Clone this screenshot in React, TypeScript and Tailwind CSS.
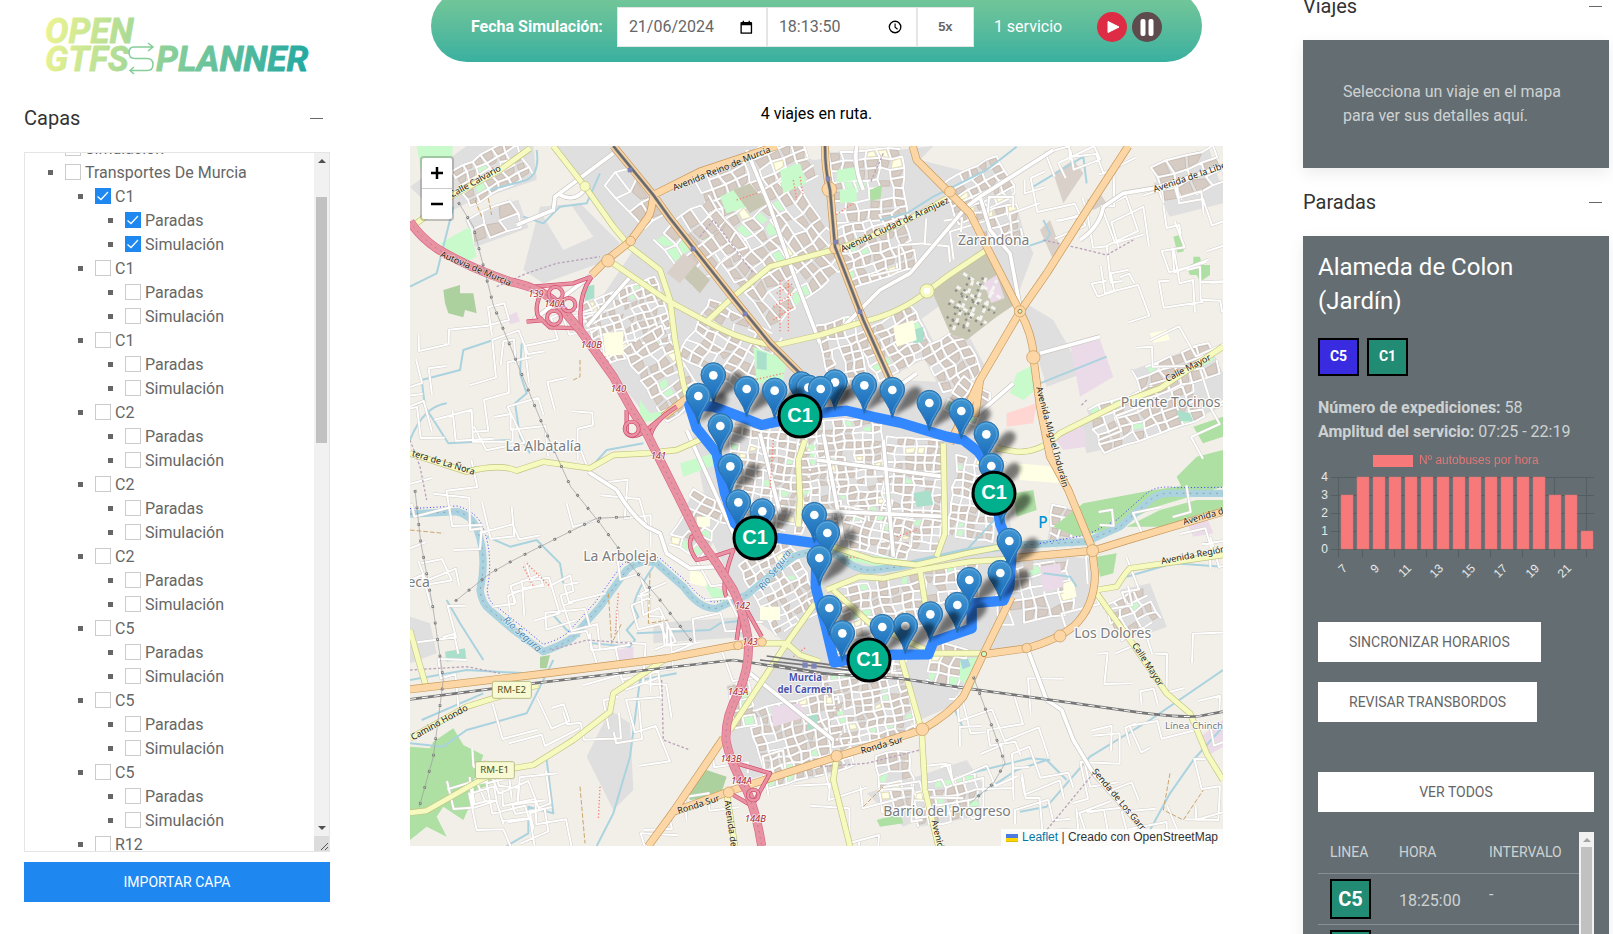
import React from "react";

/* ------------------------------------------------------------------ */
/* Map data. One map unit is a third of a pixel.                        */
/* ------------------------------------------------------------------ */

function makeRandom(seed: number) {
  let s = seed;
  return () => {
    s = (s * 1664525 + 1013904223) % 4294967296;
    return s / 4294967296;
  };
}

type District = [cx: number, cy: number, w: number, h: number, angle: number, px: number, py: number];

const districts: District[] = [
  [1060, 110, 330, 150, -24, 38, 30],
  [1130, 330, 330, 330, 52, 42, 32],
  [900, 300, 170, 200, 52, 46, 34],
  [690, 540, 250, 190, -20, 24, 22],
  [690, 165, 150, 90, 50, 60, 40],
  [800, 700, 150, 260, -32, 34, 28],
  [985, 620, 230, 200, 30, 34, 28],
  [1400, 130, 210, 200, -4, 36, 30],
  [1425, 320, 210, 170, -18, 30, 26],
  [1490, 610, 200, 160, -28, 32, 26],
  [1330, 640, 120, 200, -14, 28, 26],
  [1730, 150, 180, 130, -28, 32, 26],
  [1800, 260, 130, 110, -14, 32, 26],
  [1660, 660, 150, 150, -28, 34, 30],
  [1100, 1010, 240, 320, 8, 28, 24],
  [1330, 990, 260, 300, -4, 28, 22],
  [1540, 1060, 180, 330, 3, 30, 24],
  [1720, 1080, 130, 250, 8, 28, 24],
  [1420, 1180, 250, 120, 12, 30, 24],
  [1150, 1340, 180, 240, -28, 28, 24],
  [1450, 1400, 260, 160, -10, 32, 26],
  [1660, 1330, 170, 120, -6, 32, 28],
  [1890, 1360, 210, 160, -10, 38, 32],
  [1200, 1800, 260, 240, -14, 30, 26],
  [1400, 1700, 240, 230, -10, 28, 22],
  [1640, 1580, 110, 130, 12, 34, 30],
  [2240, 820, 330, 140, -20, 36, 28],
  [2330, 700, 240, 110, -20, 40, 32],
  [2200, 1420, 140, 120, -28, 34, 28],
  [1990, 1160, 80, 110, 10, 34, 28],
  [1640, 1980, 190, 130, -10, 32, 26],
  [1480, 1930, 90, 180, -8, 34, 28],
  [2360, 110, 180, 120, -18, 50, 38],
  [280, 90, 220, 110, -28, 34, 24],
  [290, 250, 170, 90, -20, 50, 38],
  [900, 1150, 120, 170, 26, 36, 30],
  [1400, 1570, 200, 60, 4, 36, 26],
  [1020, 1690, 60, 120, -10, 32, 26],
  [1700, 780, 90, 110, 30, 34, 28],
];

const cityBlocks = (() => {
  const rnd = makeRandom(77);
  return districts.map(([cx, cy, w, h, angle, px, py]) => {
    let streets = "";
    let buildings = "";
    let parks = "";
    let civic = "";
    const cols = Math.round(w / px);
    const rows = Math.round(h / py);
    const nodes: [number, number][][] = [];
    for (let i = 0; i <= cols; i++) {
      nodes.push([]);
      for (let j = 0; j <= rows; j++) {
        nodes[i].push([
          Math.round(-w / 2 + i * px + (rnd() - 0.5) * px * 0.34),
          Math.round(-h / 2 + j * py + (rnd() - 0.5) * py * 0.34),
        ]);
      }
    }
    for (let i = 0; i <= cols; i++) {
      for (let j = 0; j <= rows; j++) {
        const [x, y] = nodes[i][j];
        if (i < cols && rnd() < 0.84) streets += `M${x} ${y}L${nodes[i + 1][j].join(" ")}`;
        if (j < rows && rnd() < 0.8) streets += `M${x} ${y}L${nodes[i][j + 1].join(" ")}`;
        if (i < cols && j < rows) {
          const [ax, ay] = nodes[i + 1][j];
          const [bx, by] = nodes[i + 1][j + 1];
          const [dx, dy] = nodes[i][j + 1];
          const cut = Math.round(rnd() * 7);
          const shape = `M${x + 5} ${y + 5}L${ax - 5} ${ay + 5} ${bx - 5 - cut} ${by - 5} ${dx + 5} ${dy - 5}z`;
          const r = rnd();
          if (r < 0.68) buildings += shape;
          else if (r < 0.76) parks += shape;
          else if (r < 0.79) civic += shape;
        }
      }
    }
    return { cx, cy, w, h, angle, streets, buildings, parks, civic };
  });
})();

const countryLanes = (() => {
  const rnd = makeRandom(4242);
  const zones = [
    [40, 480, 620, 1100, 26],
    [40, 1150, 1000, 1620, 28],
    [60, 1650, 960, 2110, 26],
    [1900, 60, 2460, 700, 24],
    [2080, 900, 2460, 1600, 16],
    [1550, 1650, 2460, 2110, 30],
    [1050, 1900, 1500, 2110, 8],
    [1500, 40, 2100, 400, 8],
  ];
  let d = "";
  for (const [x0, y0, x1, y1, n] of zones) {
    for (let k = 0; k < n; k++) {
      let x = x0 + rnd() * (x1 - x0);
      let y = y0 + rnd() * (y1 - y0);
      const base = -0.35 + rnd() * 0.3;
      let turn = rnd() < 0.5;
      d += `M${Math.round(x)} ${Math.round(y)}`;
      const steps = 2 + Math.floor(rnd() * 4);
      for (let s = 0; s < steps; s++) {
        const len = 30 + rnd() * 90;
        const ang = base + (turn ? Math.PI / 2 : 0) + (rnd() - 0.5) * 0.4;
        const sign = rnd() < 0.75 ? 1 : -1;
        x += Math.cos(ang) * len * sign;
        y += Math.sin(ang) * len * sign;
        d += `L${Math.round(x)} ${Math.round(y)}`;
        turn = !turn;
      }
    }
  }
  return d;
})();

const urbanAreas = [
  "M460 18L1120 18 1240 60 1600 18 1560 60 1700 210 1780 380 1560 540 1500 700 1240 720 860 780 740 830 540 570 700 330z",
  "M860 780L1230 700 1500 720 1700 730 1800 900 1840 1220 2080 1260 2070 1420 1960 1490 1750 1543 1650 1700 1330 1840 1000 1930 990 1760 1160 1510 1040 1420 940 1210 900 1000z",
  "M30 140L200 18 400 18 410 120 200 190 120 230z",
  "M420 200l120 -10 120 120 -60 60 -170 60 -60 -40z",
  "M2040 860L2440 640 2469 700 2469 800 2230 900 2060 940z",
  "M2160 1350l90 -20 50 130 -80 30z",
  "M1560 60l240 60 100 220 -60 160 -120 -280z",
  "M560 1850l70 -140 60 40 10 200 -60 60z",
  "M30 1430l60 20 20 90 -80 30z",
  "M1400 1960l300 -100 60 90 -250 110z",
  "M2260 130l140 -60 69 60 0 60 -160 40z",
  "M760 1450l270 -20 10 60 -280 20z",
  "M1860 480l100 60 90 160 -110 40z",
];

const greenAreas: [string, string][] = [
  ["#f2efe9", "M430 230l80 -40 70 100 -90 40z"],
  ["#c8facc", "M50 18h108l-4 90 -90 -10z"],
  ["#c8facc", "M120 310l90 -50 20 90 -40 20z"],
  ["#c8facc", "M1060 620l100 40 -10 60 -80 10z"],
  ["#c8facc", "M1140 90l60 -20 20 60 -70 30z"],
  ["#c8facc", "M960 170l60 -30 20 60 -60 20z"],
  ["#c8facc", "M1850 700l60 -30 10 70 -50 40 -40 -20z"],
  ["#c8facc", "M1680 1560l60 -10 -20 100 -40 -30z"],
  ["#c8facc", "M840 970l100 -30 20 30 -110 40z"],
  ["#c8facc", "M1330 1240l120 10 60 10 -60 20 -120 -20z"],
  ["#c8facc", "M910 1330l60 20 20 40 -50 -10z"],
  ["#c8facc", "M1310 90l60 -10 0 40 -60 8z"],
  ["#c8facc", "M1320 150l50 -5 0 40 -50 5z"],
  ["#c8facc", "M720 780l30 40 60 -10 -40 30 -50 10z"],
  ["#add19e", "M130 450l50 -15 0 25 40 0 10 60 -35 -10 -5 22 -45 -12 -10 -30z"],
  ["#add19e", "M420 1550l30 -5 -10 40 -20 0z"],
  ["#add19e", "M860 1950l60 -60 60 20 -20 60 -90 10z"],
  ["#aedfa3", "M30 1820l60 5 10 -20 60 -40 30 50 60 30 -20 60 60 20 -60 25 -40 90 -60 -40 -20 30 30 60 -60 -30 -50 40z"],
  ["#aedfa3", "M1840 1060l60 -10 10 60 -60 20z"],
  ["#aedfa3", "M1960 1160l90 -70 210 -40 209 -30 0 20 -200 60 -140 70 -100 20z"],
  ["#aedfa3", "M2180 1160l100 -50 110 -30 79 0 0 40 -180 40z"],
  ["#aedfa3", "M2090 1250l60 -10 -10 60 -40 10z"],
  ["#aedfa3", "M2330 1010l60 -60 79 -20 0 100 -120 20z"],
  ["#aedfa3", "M2380 860l89 -30 0 60 -60 20z"],
  ["#aedfa3", "M2360 380l20 -10 0 -20 20 0 5 25 25 0 0 30 -30 20 -10 -20 -20 0z"],
  ["#aedfa3", "M2320 290l20 -6 12 50 -20 4z"],
  ["#aedfa3", "M1410 150l36 -16 -4 40 -30 10z"],
  ["#aedfa3", "M1430 2040l70 -20 10 30 -70 10z"],
  ["#c7c7b4", "M1590 440l170 -100 90 150 -60 40 -90 70 -50 -20z"],
  ["#c7c7b4", "M1000 150l50 -20 50 60 -50 30z"],
  ["#c7c7b4", "M880 370l50 50 -30 40 -50 -50z"],
  ["#ebdbe8", "M1750 430l40 -25 24 70 -40 14z"],
  ["#ebdbe8", "M2010 610l90 -10 40 110 -100 60z"],
  ["#ebdbe8", "M1960 890l90 -30 10 60 -70 10z"],
  ["#ebdbe8", "M650 1530l50 -10 0 40 -50 6z"],
  ["#ebdbe8", "M1110 1700l90 -10 20 40 -100 30z"],
  ["#ebdbe8", "M320 530l30 -15 10 30 -30 8z"],
  ["#ebdbe8", "M2360 1150l60 -20 20 50 -60 10z"],
  ["#ebdbe8", "M1920 1280l60 -10 10 70 -60 15z"],
  ["#ebdbe8", "M2400 1790l69 -50 0 80 -50 30z"],
  ["#ffd6d1", "M1820 820l90 -30 -10 60 -80 10z"],
  ["#aae0cb", "M555 440l28 -6 0 40 -28 10z"],
  ["#aae0cb", "M135 1535l60 -10 4 34 -60 6z"],
  ["#aae0cb", "M1070 630l30 10 0 50 -30 -4z"],
  ["#aae0cb", "M1540 570l30 -10 0 46 -30 4z"],
  ["#aae0cb", "M1220 1730l30 -8 4 40 -30 8z"],
  ["#aae0cb", "M1540 1060l50 -10 10 44 -50 8z"],
  ["#aae0cb", "M2330 810l40 10 10 24 -40 0z"],
  ["#ffffe5", "M610 580l60 -6 0 70 -60 4z"],
  ["#ffffe5", "M1480 560l60 -20 10 60 -60 20z"],
  ["#ffffe5", "M1080 1400l60 0 0 40 -60 0z"],
  ["#ffffe5", "M2250 580l50 -10 10 30 -50 8z"],
  ["#ffffe5", "M1850 970l120 10 10 50 -120 -10z"],
  ["#ffffe5", "M870 1290l50 10 0 40 -50 -10z"],
  ["#ffffe5", "M1990 1330l30 -10 10 50 -40 10z"],
  ["#ffffe5", "M890 1130l40 0 0 30 -40 0z"],
  ["#aad3df", "M1680 1560l24 -4 8 22 -24 10z"],
  ["#d9d0c9", "M800 400l50 -60 40 30 -50 60z"],
  ["#d9d0c9", "M1960 100l60 -40 30 40 -60 90z"],
  ["#d9d0c9", "M2060 180l40 -20 20 30 -40 20z"],
  ["#d9d0c9", "M1920 270l30 -30 30 80 -20 40z"],
  ["#d9d0c9", "M1870 1250l30 0 0 40 -30 0z"],
];

const river =
  "M30 1122L170 1115Q215 1125 232 1170Q262 1250 240 1350Q245 1390 270 1410L340 1470 430 1535Q500 1510 520 1490L600 1400 680 1290Q720 1255 770 1270L850 1340Q900 1410 950 1405L1040 1365 1180 1250Q1260 1220 1320 1250Q1370 1295 1420 1290L1500 1280 1700 1235 1860 1215 2060 1205 2160 1160 2250 1080Q2280 1055 2330 1060L2469 1060";

const riverPath =
  "M30 1106L170 1098Q235 1115 252 1170Q280 1250 262 1345 262 1385 290 1400L360 1455 430 1513Q490 1495 510 1470L585 1388 665 1275Q715 1235 780 1255L860 1325Q910 1390 950 1386L1020 1365M1920 1210L2060 1185 2150 1140 2240 1060Q2270 1035 2330 1043L2469 1042";

const streams = [
  "M30 440L110 400 140 280 160 200",
  "M410 30Q420 100 380 120L270 150",
  "M600 100L560 190 480 200 430 250 370 230",
  "M280 600L190 630 180 690 65 720 75 800",
  "M365 610L360 700 380 760 345 790 360 890 390 940",
  "M75 800L145 910 330 900",
  "M730 910L620 930 570 985",
  "M30 900Q70 800 140 790",
  "M260 1190L330 1220 410 1200 480 1270 490 1330",
  "M760 1280Q710 1350 700 1400L715 1430 680 1470 705 1500 690 1520 575 1510",
  "M140 1380L180 1450 250 1560",
  "M30 1620L200 1590 380 1600",
  "M455 1420L500 1470 540 1490",
  "M1040 1440L960 1450 930 1470 710 1480",
  "M65 1740L250 1660 M30 1810L130 1820 200 1770 380 1720 460 1560",
  "M590 2118L640 2020 690 1850 720 1620 830 1600",
  "M440 1860L460 2020 385 2000 385 2080 320 2118",
  "M1440 240L1520 220 1600 170 1760 90 1850 20",
  "M1900 140L2050 50 2060 130 M1930 240L1950 280 1940 300 1880 320",
  "M1920 730L2120 650",
  "M1710 1900L1890 1855 1950 1860 M1730 1970L1850 1890 1940 1860 2000 1920",
  "M1860 2015L1940 2000 2070 1850 2250 1740 2469 1590",
  "M1660 1700L1690 1765",
  "M2250 2070L2310 1960 2380 1860 2469 1760",
  "M1930 1300L2010 1310 2030 1340",
  "M2180 1310L2320 1270 2469 1280",
  "M1700 1230L1820 1100",
];

const secondaryRoads = [
  "M460 18L555 140 640 260 690 320 780 390 810 480 825 600 850 730 860 770",
  "M30 265L160 165 300 90 390 25",
  "M640 370L800 480 920 545Q1040 610 1130 615L1260 585 1390 545Q1500 520 1580 455L1640 410 1760 330",
  "M920 545L1000 470 1110 380 1260 340 1320 325Q1500 260 1640 175",
  "M30 940L200 995Q300 970 350 992L430 965 570 985 640 945 740 940 830 930 910 895",
  "M1790 925L1850 935Q1920 940 1980 880L2160 790 2280 745 2469 620",
  "M2090 1350L2150 1340Q2175 1300 2190 1285L2469 1245",
  "M2090 1360L2190 1500 2300 1660 2370 1720 2420 1840 2469 1920",
  "M1505 1560L1565 1770 1575 1950 1615 2118",
  "M1310 1850L1300 1920 1350 2118",
  "M980 1960L1005 2118",
  "M1245 1390L1160 1510 990 1770",
  "M1090 1510L1160 1510 1200 1545 1260 1565",
  "M30 1795L200 1700 280 1675 415 1635",
  "M30 2018L80 2012 250 1915 340 1885 400 1875 480 1825 520 1800 630 1715 640 1660 800 1555",
  "M30 1470L55 1560 78 1638",
  "M1630 910L1635 1180 1610 1250",
  "M1195 1160L1200 1080 1195 960 1215 900",
  "M1300 1220L1420 1260 1550 1275 1700 1240 1830 1215",
  "M1280 1350L1380 1310 1450 1315 1560 1290 1710 1265 1860 1255",
  "M1300 1350L1410 1450 1600 1540 1750 1540",
  "M1560 1290L1580 1420",
];

const primaryRoads = [
  "M640 18L760 165 810 235 1000 475 1110 610 1200 700",
  "M760 165L900 95 1130 18",
  "M760 165Q755 215 745 230L690 305 620 360 575 405",
  "M1275 18Q1275 90 1290 150L1305 320 1390 540 1480 740",
  "M1538 18L1550 60 1650 160 1710 220 1760 320 1860 515Q1900 590 1900 650L1920 800 1950 950 2005 1050 2075 1220 2085 1300Q2085 1400 2020 1460Q1970 1500 1880 1525L1750 1543",
  "M2185 18L2080 180 1940 400 1860 515 1740 720 1725 830 M1740 720L1650 910",
  "M1835 1370L1750 1543 1690 1670Q1650 1720 1565 1770L1310 1850 1000 1950 820 2015",
  "M970 1795L820 2015 745 2118",
  "M30 1648L400 1605 800 1555 1000 1517 1090 1505",
  "M1830 1255L2080 1232 2200 1195 2469 1115",
  "M790 830L860 775",
];

const motorway =
  "M30 245Q60 290 110 325Q200 380 330 425Q430 445 480 500L540 570 590 640 640 710 690 800 740 880 780 960 830 1060 870 1140 900 1200 950 1270 1000 1350Q1030 1410 1045 1500Q1050 1580 1015 1660Q975 1730 978 1800Q990 1870 1040 1950Q1070 2020 1085 2118";

const ramps =
  "M400 440L520 430 575 410 M575 410Q530 470 545 570 M430 445Q400 500 415 530L450 562 540 565 M380 545L430 540 M680 810L680 880Q700 900 740 870L800 820 M750 900Q750 850 830 800 M980 1370Q960 1340 1000 1230L940 1250 890 1260Q860 1220 875 1190L900 1190 M1025 1400L1010 1500 M1040 1410L1085 1490 M1010 1870L1110 1900 1060 1990 M1000 1965L1060 2000";

const minorRoads =
  "M350 255L460 210 465 170 640 40 M480 165Q530 190 560 140 M1370 18Q1360 80 1390 150 M1330 560L1440 450 1530 400 1700 200 1740 170 1960 30 M1740 170L1770 270 1830 340 1860 500 M1920 640L2100 590 M2110 200L2170 160 2260 145 2469 80 M2110 200Q2100 260 2040 300 M1940 1680L1985 1710 2020 1800 2080 1900 2240 2080 M650 1050Q690 1120 740 1160L780 1180 800 1240 870 1285 950 1280 M565 995L650 1050 M1040 30L1110 200 1180 400 1260 610 M575 405L400 540 M1550 700L1440 780 M1725 830L1840 730 M1880 1520L1940 1680 M560 560L700 400 M860 870L1000 1180 M1080 880L1140 1120 M1270 880L1330 1200 M1450 900L1480 1250 M1250 960L1630 1010 M1210 1110L1640 1130 M1050 1600L1300 1800";

const railway =
  "M30 1678L400 1630 740 1590 1000 1560 1260 1600 1500 1615 1700 1645 1940 1678 2200 1715Q2350 1735 2400 1728L2469 1715";

const powerLines = [
  "M175 187L220 260 280 495 360 690 430 860 512 1040 600 1150 700 1285 780 1380 880 1510",
  "M165 1384L270 1300 345 1258 480 1190 590 1135 690 1130",
  "M45 1050L62 1205 100 1410 130 1620 100 1850 58 2000",
  "M1720 1610L1780 1770 1815 1870 1780 1930 1710 1990",
];

const route =
  "M868 795L890 865 950 940 975 1060 1005 1150 1065 1190 1140 1195 1250 1210 1247 1340 1275 1450 1303 1568 1410 1545 1585 1543 1600 1505 1715 1465 1715 1390 1810 1382 1828 1340 1835 1240 1800 1150 1780 1000 1735 935 1690 900 1640 890 1500 848 1425 832 1340 812 1200 825 1130 845 1085 855 1020 830 940 800z";

const stops: [number, number][] = [
  [940, 706], [1204, 733], [1225, 743], [1305, 727], [1393, 736], [1262, 747], [1040, 747],
  [1477, 750], [1124, 752], [895, 768], [1588, 789], [1684, 813], [961, 858], [1759, 883],
  [1774, 978], [991, 979], [1805, 1070], [1015, 1087], [1087, 1114], [1243, 1125],
  [1282, 1179], [1828, 1203], [1258, 1254], [1801, 1299], [1708, 1320], [1672, 1395],
  [1288, 1404], [1591, 1423], [1516, 1458], [1447, 1461], [1327, 1480],
];

const buses: [number, number][] = [[1200, 828], [1782, 1060], [1065, 1194], [1407, 1560]];

type Label = [x: number, y: number, angle: number, text: string];

const placeLabels: Label[] = [
  [1781, 315, 0, "Zarandona"],
  [430, 932, 0, "La Albatalía"],
  [660, 1262, 0, "La Arboleja"],
  [2312, 801, 0, "Puente Tocinos"],
  [2138, 1495, 0, "Los Dolores"],
  [1641, 2029, 0, "Barrio del Progreso"],
  [56, 1341, 0, "eca"],
];

const roadLabels: Label[] = [
  [230, 132, -29, "Calle Calvario"],
  [968, 94, -22, "Avenida Reino de Murcia"],
  [224, 394, 23, "Autovía de Murcia"],
  [128, 976, 17, "tera de La Ñora"],
  [1488, 262, -25, "Avenida Ciudad de Aranjuez"],
  [2372, 120, -19, "Avenida de la Libe"],
  [2368, 692, -27, "Calle Mayor"],
  [1948, 893, 75, "Avenida Miguel Induráin"],
  [2412, 1138, -16, "Avenida d"],
  [2382, 1254, -11, "Avenida Región"],
  [2236, 1578, 57, "Calle Mayor"],
  [122, 1755, -29, "Camino Hondo"],
  [898, 2002, -18, "Ronda Sur"],
  [1448, 1824, -16, "Ronda Sur"],
  [2150, 1984, 50, "Senda de Los Garr"],
  [983, 2052, 82, "Avenida de"],
  [1604, 2084, 77, "Avenid"],
];

const exitLabels: Label[] = [
  [408, 470, 0, "139"], [464, 502, 0, "140A"], [574, 624, 0, "140B"], [655, 756, 0, "140"],
  [775, 957, 0, "141"], [1027, 1406, 0, "142"], [1050, 1516, 0, "143"], [1014, 1665, 0, "143A"],
  [993, 1866, 0, "143B"], [1024, 1931, 0, "144A"], [1066, 2046, 0, "144B"],
];

function MapLabels({ labels, className }: { labels: Label[]; className: string }) {
  return (
    <g className={className} textAnchor="middle" paintOrder="stroke" strokeLinejoin="round">
      {labels.map(([x, y, angle, text]) => (
        <text key={`${text}${x}`} transform={`translate(${x} ${y}) rotate(${angle})`}>
          {text}
        </text>
      ))}
    </g>
  );
}

function CasedRoads({ paths, fill, casing, width }: { paths: string[]; fill: string; casing: string; width: number }) {
  const d = paths.join("");
  return (
    <g fill="none" strokeLinejoin="round">
      <path d={d} stroke={casing} strokeWidth={width + 4} />
      <path d={d} stroke={fill} strokeWidth={width} />
    </g>
  );
}

function CityMap() {
  return (
    <svg
      viewBox="30 18 2439 2100"
      preserveAspectRatio="xMidYMid slice"
      className="block h-full w-full bg-[#f2efe9]"
      role="img"
      aria-label="Mapa de Murcia"
    >
      <defs>
        <linearGradient id="pin" x1="0" y1="0" x2="0" y2="1">
          <stop offset="0" stopColor="#4297d2" />
          <stop offset="1" stopColor="#1466b8" />
        </linearGradient>
        <filter id="soft" x="-50%" y="-50%" width="200%" height="200%">
          <feGaussianBlur stdDeviation="7" />
        </filter>
        <g id="stop">
          <path d="M0 80L34 20Q62 -22 84 -4Q98 16 62 44z" fill="#000" opacity="0.5" filter="url(#soft)" />
          <path
            d="M0 84Q-6 56 -24 30Q-37 14 -37 -1A37 37 0 0 1 37 -1Q37 14 24 30Q6 56 0 84z"
            fill="url(#pin)"
            stroke="#2a6fa8"
            strokeWidth="3"
          />
          <path d="M-32 -1A32 32 0 0 1 32 -1Q32 12 20 29Q6 50 0 68" fill="none" stroke="#7fbbe4" strokeWidth="3" opacity="0.5" />
          <circle r="13" fill="#fff" />
        </g>
      </defs>

      <rect x="30" y="18" width="2439" height="2100" fill="#f2efe9" />
      {urbanAreas.map((d) => <path key={d} d={d} fill="#e0dfdf" />)}

      {cityBlocks.map((b) => (
        <g key={`${b.cx}-${b.cy}`} transform={`translate(${b.cx} ${b.cy}) rotate(${b.angle})`}>
          <rect x={-b.w / 2} y={-b.h / 2} width={b.w} height={b.h} fill="#e0dfdf" />
        </g>
      ))}
      {cityBlocks.map((b) => (
        <g key={`${b.cx}-${b.cy}`} transform={`translate(${b.cx} ${b.cy}) rotate(${b.angle})`}>
          <path d={b.streets} fill="none" stroke="#c9c6c6" strokeWidth="8" strokeLinecap="round" />
          <path d={b.buildings} fill="#d6ccc4" stroke="#c3b6ab" strokeWidth="2" />
          <path d={b.parks} fill="#c8facc" />
          <path d={b.civic} fill="#ffffe5" stroke="#e0d8a8" strokeWidth="2" />
          <path d={b.streets} fill="none" stroke="#fff" strokeWidth="6" strokeLinecap="round" />
        </g>
      ))}
      {greenAreas.map(([fill, d]) => <path key={d} d={d} fill={fill} />)}
      <path
        d="M1670 440l120 70M1650 480l110 70M1690 400l120 80M1660 570l60 -150M1700 560l60 -150M1740 540l50 -120"
        stroke="#f4f4f0"
        strokeWidth="9"
        strokeDasharray="14 10"
        fill="none"
      />
      <path
        d="M1665 450l120 70M1645 490l110 70M1640 530l80 50M1650 560l60 -150M1690 560l60 -150"
        stroke="#8f8f88"
        strokeWidth="7"
        strokeDasharray="7 12"
        fill="none"
      />

      <path d={streams.join("")} fill="none" stroke="#aad3df" strokeWidth="6" strokeLinejoin="round" />
      <path d={river} fill="none" stroke="#aad3df" strokeWidth="22" strokeLinejoin="round" />
      <path d={riverPath} fill="none" stroke="#3a3aff" strokeWidth="3" strokeDasharray="3 7" />
      <path d={river} fill="none" stroke="#8f9fb8" strokeWidth="3" strokeDasharray="6 14" />

      <path d={countryLanes} fill="none" stroke="#d3cfca" strokeWidth="9" strokeLinejoin="round" />
      <path d={countryLanes} fill="none" stroke="#fff" strokeWidth="6" strokeLinejoin="round" />
      <CasedRoads paths={[minorRoads]} fill="#fff" casing="#c8c4c0" width={11} />

      <path
        d="M225 180l20 50M265 175l10 50M540 1940l15 170M625 1360l10 150 30 -60M750 1300l-5 150 60 -10M1390 2000l60 -60M2310 1900l-20 110 60 30 60 -90M540 660l0 50 -20 10M30 1170l100 10"
        fill="none"
        stroke="#c9a66b"
        strokeWidth="3"
        strokeDasharray="14 6"
      />
      <path
        d="M30 900L60 980 80 1080M290 440L380 400 470 370 600 350M900 290L940 240 1060 400M455 1530L560 1500 700 1510M785 1620L790 1800 870 1830M1930 300L2060 330 2120 345 2200 300M2060 780L2040 800M1450 40L1410 130M2080 1900L1940 2070M30 1590L200 1580 300 1600M1260 1880L1400 1870 1560 1830"
        fill="none"
        stroke="#b9a3bb"
        strokeWidth="4"
        strokeDasharray="8 6"
      />
      <path
        d="M380 1270l70 70M370 1280l30 60M655 1360l-10 130M600 1940l-5 100M1120 500l60 -40M1120 540l60 -40M1130 460l50 -30M1140 420l0 160M1165 420l0 160M1300 230l60 -40M1120 900l-10 150M1060 720l90 -20M1180 1550l40 -30M1180 120l10 60M1200 110l10 60M1010 180l60 -20M1490 1190l60 -20M1340 1250l100 12"
        fill="none"
        stroke="#fa8072"
        strokeWidth="4"
        strokeDasharray="4 6"
      />

      <CasedRoads paths={secondaryRoads} fill="#f7fabf" casing="#c3c583" width={15} />
      <path d={railway} fill="none" stroke="#777" strokeWidth="8" />
      <path d={railway} fill="none" stroke="#fff" strokeWidth="3" strokeDasharray="18 18" />
      <path d="M1080 1560L1260 1580 1420 1600M1100 1548L1260 1570 1400 1590M1120 1572L1300 1604" stroke="#777" strokeWidth="5" fill="none" />
      <CasedRoads paths={primaryRoads} fill="#fcd6a4" casing="#c6995c" width={20} />
      <CasedRoads paths={[ramps]} fill="#e892a2" casing="#d0496f" width={9} />
      <CasedRoads paths={[motorway]} fill="#e892a2" casing="#d66a88" width={23} />
      <g fill="none" stroke="#d0496f" strokeWidth="12">
        <circle cx="467" cy="462" r="21" />
        <circle cx="506" cy="494" r="20" />
        <circle cx="462" cy="533" r="21" />
        <circle cx="695" cy="866" r="21" />
        <circle cx="1060" cy="1965" r="16" />
      </g>
      <g fill="none" stroke="#e892a2" strokeWidth="8">
        <circle cx="467" cy="462" r="21" />
        <circle cx="506" cy="494" r="20" />
        <circle cx="462" cy="533" r="21" />
        <circle cx="695" cy="866" r="21" />
        <circle cx="1060" cy="1965" r="16" />
      </g>
      <path d={motorway} fill="none" stroke="#b17ba6" strokeWidth="3" strokeDasharray="5 13" />
      <g fill="#fcd6a4" stroke="#c6995c" strokeWidth="2">
        <circle cx="692" cy="303" r="14" />
        <circle cx="624" cy="362" r="19" />
        <circle cx="1288" cy="148" r="22" />
        <circle cx="1305" cy="325" r="16" />
        <circle cx="1650" cy="155" r="16" />
        <circle cx="1860" cy="514" r="17" />
        <circle cx="1900" cy="652" r="20" />
        <circle cx="2078" cy="1232" r="18" />
        <circle cx="1980" cy="1488" r="18" />
        <circle cx="1880" cy="1524" r="14" />
        <circle cx="1567" cy="1768" r="19" />
        <circle cx="1310" cy="1848" r="17" />
        <circle cx="986" cy="1957" r="16" />
        <circle cx="1014" cy="1516" r="13" />
        <circle cx="1086" cy="1506" r="13" />
      </g>
      <g fill="#c8facc" stroke="#b5813f" strokeWidth="3">
        <circle cx="1860" cy="514" r="6" />
        <circle cx="1752" cy="1542" r="8" />
      </g>
      <circle cx="1581" cy="453" r="15" fill="#fff" stroke="#c3c583" strokeWidth="15" />
      <circle cx="1581" cy="453" r="15" fill="#fff" stroke="#f7fabf" strokeWidth="11" />
      <circle cx="555" cy="139" r="15" fill="#f7fabf" stroke="#c3c583" strokeWidth="2" />

      <g fill="none">
        <path d="M640 18L760 165 810 235 1000 475 1110 610 1200 700M1275 18Q1275 90 1290 150L1305 320 1390 540 1480 740" stroke="#b9b2a8" strokeWidth="11" />
        <path d="M640 18L760 165 810 235 1000 475 1110 610 1200 700M1275 18Q1275 90 1290 150L1305 320 1390 540 1480 740" stroke="#6b6868" strokeWidth="7" />
      </g>
      <g fill="#7d84b8">
        {[[690, 90], [879, 327], [1035, 522], [1284, 117], [1308, 306], [1380, 515]].map(([x, y]) => (
          <rect key={x} x={x - 7} y={y - 7} width="14" height="14" />
        ))}
        <rect x="1207" y="1567" width="16" height="16" />
        <rect x="1234" y="1570" width="16" height="16" />
      </g>

      {powerLines.map((d) => (
        <g key={d} fill="none">
          <path d={d} stroke="#9a9a9a" strokeWidth="2" />
          <path d={d} stroke="#777" strokeWidth="8" strokeDasharray="8 42" />
          <path d={d} stroke="#eee" strokeWidth="3" strokeDasharray="3 47" strokeDashoffset="-2" />
        </g>
      ))}

      <MapLabels labels={placeLabels} className="fill-[#7c7c7c] stroke-white stroke-[7px] font-['Noto_Sans',sans-serif] text-[42px]" />
      <MapLabels labels={roadLabels} className="fill-[#222] stroke-[#fff8e0]/60 stroke-[4px] font-['Noto_Sans',sans-serif] text-[27px]" />
      <MapLabels labels={exitLabels} className="fill-[#a5262e] stroke-white/80 stroke-[5px] font-['Noto_Sans',sans-serif] text-[28px] italic" />
      <MapLabels
        labels={[[360, 1490, 42, "Río Segura"], [1132, 1296, -53, "Río Segura"]]}
        className="fill-[#4a86b0] stroke-white/70 stroke-[4px] font-['Noto_Sans',sans-serif] text-[30px] italic"
      />
      <MapLabels
        labels={[[1216, 1623, 0, "Murcia"], [1215, 1658, 0, "del Carmen"]]}
        className="fill-[#4a52a8] stroke-white stroke-[5px] font-['Noto_Sans',sans-serif] text-[29px] font-bold"
      />
      <MapLabels labels={[[2382, 1768, 0, "Línea Chinch"]]} className="fill-[#777] stroke-white stroke-[5px] font-['Noto_Sans',sans-serif] text-[29px]" />
      <MapLabels labels={[[1929, 1165, 0, "P"]]} className="fill-[#0092da] font-['Noto_Sans',sans-serif] text-[46px] font-medium" />
      <g fill="#f7fad2" stroke="#b9bb84" strokeWidth="3">
        <rect x="277" y="1624" width="117" height="51" rx="6" />
        <rect x="226" y="1865" width="117" height="51" rx="6" />
      </g>
      <MapLabels labels={[[335, 1659, 0, "RM-E2"], [284, 1900, 0, "RM-E1"]]} className="fill-[#51521a] font-['Noto_Sans',sans-serif] text-[29px]" />

      <path d={route} fill="none" stroke="#3388ff" strokeWidth="31" strokeLinejoin="round" />
      {stops.map(([x, y]) => <use key={`${x}-${y}`} href="#stop" x={x} y={y} />)}
      {buses.map(([x, y]) => (
        <g key={x}>
          <circle cx={x} cy={y} r="63" fill="#00b08c" stroke="#000" strokeWidth="9" />
          <text x={x} y={y + 18} textAnchor="middle" className="fill-white font-['Liberation_Sans',sans-serif] text-[60px] font-bold">
            C1
          </text>
        </g>
      ))}
    </svg>
  );
}

/* ------------------------------------------------------------------ */
/* Left column                                                          */
/* ------------------------------------------------------------------ */

function Logo() {
  return (
    <svg viewBox="0 0 306 80" className="block h-20 w-full" role="img" aria-label="Open GTFS Planner">
      <defs>
        <linearGradient id="brand" gradientUnits="userSpaceOnUse" x1="24" y1="20" x2="280" y2="80">
          <stop offset="0" stopColor="#ecf391" />
          <stop offset="0.5" stopColor="#85cd99" />
          <stop offset="1" stopColor="#22a8a0" />
        </linearGradient>
      </defs>
      <g
        fill="url(#brand)"
        stroke="url(#brand)"
        strokeWidth="0.8"
        strokeLinejoin="round"
        className="font-['Roboto',sans-serif] text-[35px] font-bold italic"
      >
        <text x="21" y="43">OPEN</text>
        <text x="21" y="71">GTFS</text>
        <text x="132" y="71">PLANNER</text>
      </g>
      <path
        d="M128 47H110Q105 47 105 52.500Q105 58.500 111 58.500H123Q129 58.500 129 64.500Q129 70.500 123 70.500H107M124 43l5 4 -5 4M110 67l-4 3.500 4 3.500"
        fill="none"
        stroke="#85cd99"
        strokeWidth="1.500"
      />
    </svg>
  );
}

type Layer = { level: 1 | 2 | 3; name: string; on?: boolean };

const lines = ["C1", "C1", "C1", "C2", "C2", "C2", "C5", "C5", "C5"];
const layers: Layer[] = [
  { level: 1, name: "Simulación" },
  { level: 1, name: "Transportes De Murcia" },
  ...lines.flatMap((name, i): Layer[] => [
    { level: 2, name, on: i === 0 },
    { level: 3, name: "Paradas", on: i === 0 },
    { level: 3, name: "Simulación", on: i === 0 },
  ]),
  { level: 2, name: "R12" },
];

const indent = { 1: "pl-[23px]", 2: "pl-[53px]", 3: "pl-[83px]" };

function LayerRow({ layer }: { layer: Layer }) {
  return (
    <li className={`flex h-6 items-center ${indent[layer.level]}`}>
      <span className="mr-3 size-[5px] shrink-0 bg-[#666]" />
      <label className="flex items-center gap-1">
        <span className="relative flex size-4">
          <input
            type="checkbox"
            defaultChecked={layer.on}
            className="peer size-4 appearance-none border border-[#ccc] bg-white checked:border-[#1e87f0] checked:bg-[#1e87f0]"
          />
          <svg viewBox="0 0 16 16" className="pointer-events-none absolute inset-0 hidden size-4 peer-checked:block">
            <path d="M2.500 8.500L6 11.500 13 4" fill="none" stroke="#fff" strokeWidth="1.300" />
          </svg>
        </span>
        <span className="pt-0.5">{layer.name}</span>
      </label>
    </li>
  );
}

function SectionTitle({ children }: { children: React.ReactNode }) {
  return (
    <div className="flex h-7 items-center justify-between pr-[7px]">
      <h2 className="text-xl leading-7 text-[#333]">{children}</h2>
      <span className="h-px w-[13px] bg-[#666]" />
    </div>
  );
}

function LayersPanel() {
  return (
    <aside>
      <Logo />
      <div className="mt-6">
        <SectionTitle>Capas</SectionTitle>
      </div>
      <div className="mt-5 flex h-[700px] border border-[#e5e5e5]">
        <ul className="-mt-[17px] h-[715px] flex-1 overflow-hidden [clip-path:inset(17px_0_0_0)]">
          {layers.map((layer, i) => <LayerRow key={i} layer={layer} />)}
        </ul>
        <div className="flex w-[15px] flex-col items-center bg-[#f1f1f1]">
          <span className="mt-[6px] border-x-4 border-b-4 border-x-transparent border-b-[#505050]" />
          <span className="mt-[34px] h-[246px] w-[11px] bg-[#c1c1c1]" />
          <span className="mt-auto mb-[6px] border-x-4 border-t-4 border-x-transparent border-t-[#505050]" />
          <svg viewBox="0 0 15 15" className="size-[15px] shrink-0 bg-[#dcdcdc]">
            <path d="M7 14L14 7M11 14L14 11" stroke="#555" fill="none" />
          </svg>
        </div>
      </div>
      <button className="mt-[10px] h-10 w-full bg-[#1e87f0] text-sm text-white">IMPORTAR CAPA</button>
    </aside>
  );
}

/* ------------------------------------------------------------------ */
/* Centre column                                                        */
/* ------------------------------------------------------------------ */

function CalendarIcon() {
  return (
    <svg viewBox="0 0 14 15" className="h-[15px] w-[14px]">
      <path d="M3 0h1.500v1.500h5V0H11v1.500h1.500q1 0 1 1V13.500q0 1 -1 1H1.500q-1 0 -1 -1V2.500q0 -1 1 -1H3z" fill="#000" />
      <rect x="2" y="5" width="10" height="8" fill="#fff" />
    </svg>
  );
}

function ClockIcon() {
  return (
    <svg viewBox="0 0 16 16" className="size-4">
      <circle cx="8" cy="8" r="6.500" fill="none" stroke="#000" strokeWidth="1.500" />
      <path d="M8 4V8.300L10.800 10.500" fill="none" stroke="#000" strokeWidth="1.300" />
    </svg>
  );
}

function SimulationBar() {
  return (
    <div className="-mt-[10px] flex h-[72px] w-[771px] items-center self-center rounded-full bg-linear-to-b from-[#78c997] to-[#38b09f] px-10 pt-0.5 text-white">
      <label htmlFor="sim-date" className="mr-[14px] font-bold whitespace-nowrap">Fecha Simulación:</label>
      <div className="flex h-10 text-[#666]">
        <div className="flex w-[150px] items-center border border-[#e5e5e5] bg-white pr-[13px] pl-[11px]">
          <input id="sim-date" defaultValue="21/06/2024" className="w-full min-w-0 outline-none" />
          <CalendarIcon />
        </div>
        <div className="flex w-[150px] items-center border border-[#e5e5e5] bg-white pr-[14px] pl-[11px]">
          <input aria-label="Hora" defaultValue="18:13:50" className="w-full min-w-0 outline-none" />
          <ClockIcon />
        </div>
        <button className="w-[57px] border border-[#e5e5e5] bg-white font-['Liberation_Sans',sans-serif] text-[13px] font-bold">5x</button>
      </div>
      <span className="ml-5 whitespace-nowrap">1 servicio</span>
      <div className="ml-auto flex gap-[5px]">
        <button aria-label="Reproducir">
          <svg viewBox="0 0 30 30" className="block size-[30px]">
            <circle cx="15" cy="15" r="15" fill="#dd2c44" />
            <path d="M11 9.500v11l11 -5.500z" fill="#fff" stroke="#fff" strokeLinejoin="round" />
          </svg>
        </button>
        <button aria-label="Pausar">
          <svg viewBox="0 0 30 30" className="block size-[30px]">
            <circle cx="15" cy="15" r="15" fill="#5d4b4e" />
            <rect x="8.500" y="7" width="5" height="17" rx="2" fill="#fff" />
            <rect x="16.500" y="7" width="5" height="17" rx="2" fill="#fff" />
          </svg>
        </button>
      </div>
    </div>
  );
}

function MapPanel() {
  return (
    <div className="relative mt-5 h-[700px] overflow-hidden">
      <CityMap />
      <div className="absolute top-[10px] left-[10px] flex flex-col overflow-hidden rounded border-2 border-black/20 bg-white bg-clip-padding font-bold text-black">
        <button aria-label="Acercar" className="flex h-[31px] w-[30px] items-center justify-center border-b border-[#ccc]">
          <svg viewBox="0 0 12 12" className="size-3"><path d="M6 0V12M0 6H12" stroke="#000" strokeWidth="2.500" /></svg>
        </button>
        <button aria-label="Alejar" className="flex size-[30px] items-center justify-center">
          <svg viewBox="0 0 12 12" className="size-3"><path d="M0 6H12" stroke="#000" strokeWidth="2.500" /></svg>
        </button>
      </div>
      <div className="absolute right-0 bottom-0 flex items-center bg-white/80 px-[5px] font-['Liberation_Sans',sans-serif] text-xs leading-[17px] text-[#333]">
        <svg viewBox="0 0 12 8" className="mr-1 h-2 w-3">
          <path fill="#4c7be1" d="M0 0h12v4H0z" />
          <path fill="#ffd500" d="M0 4h12v3H0z" />
          <path fill="#e0bc00" d="M0 7h12v1H0z" />
        </svg>
        <a href="https://leafletjs.com" className="text-[#0078a8]">Leaflet</a>
        <span className="whitespace-pre"> | Creado con OpenStreetMap</span>
      </div>
    </div>
  );
}

/* ------------------------------------------------------------------ */
/* Right column                                                         */
/* ------------------------------------------------------------------ */

const busesPerHour = [3, 4, 4, 4, 4, 4, 4, 4, 4, 4, 4, 4, 4, 3, 3, 1];

function HourChart() {
  const base = 105;
  return (
    <svg viewBox="0 0 276 138" className="block w-full font-['Liberation_Sans',sans-serif] text-xs" role="img" aria-label="Nº autobuses por hora">
      <rect x="55" y="11" width="40" height="12" fill="#f87979" />
      <text x="101" y="20" fill="#f87979" opacity="0.85">Nº autobuses por hora</text>
      <g stroke="#535e60">
        {[0, 1, 2, 3, 4].map((v) => <path key={v} d={`M13 ${base - v * 18 + 0.5}H276`} />)}
        <path d="M20.500 33V113" />
        {[0, 1, 2, 3, 4, 5, 6, 7].map((i) => <path key={i} d={`M${44.5 + i * 32} 33V113`} />)}
      </g>
      <g fill="#e8eaea" textAnchor="end">
        {[0, 1, 2, 3, 4].map((v) => <text key={v} x="10" y={base - v * 18 + 4}>{v}</text>)}
      </g>
      {busesPerHour.map((v, i) => (
        <rect key={i} x={23 + i * 16} y={base - v * 18} width="12" height={v * 18} fill="#f87979" stroke="#d07377" strokeWidth="0.500" />
      ))}
      <g fill="#e8eaea" textAnchor="end">
        {[7, 9, 11, 13, 15, 17, 19, 21].map((h, i) => (
          <text key={h} transform={`translate(${30 + i * 32} 125) rotate(-45)`}>{h}</text>
        ))}
      </g>
    </svg>
  );
}

function TripsCard() {
  return (
    <div className="bg-[#646e72] p-10 shadow-[0_5px_15px_rgba(0,0,0,0.08)]">
      Selecciona un viaje en el mapa para ver sus detalles aquí.
    </div>
  );
}

function LineBadge({ name }: { name: string }) {
  return (
    <span className="flex h-10 w-[41px] items-center justify-center border-2 border-black bg-[#228b74] text-xl font-bold text-white">
      {name}
    </span>
  );
}

const departures = [
  { line: "C5", time: "18:25:00", gap: "-" },
  { line: "C5", time: "18:40:00", gap: "15" },
];

function StopCard() {
  return (
    <div className="bg-[#646e72] px-[15px] pt-[14px] pb-10 shadow-[0_5px_15px_rgba(0,0,0,0.08)]">
      <h3 className="text-2xl leading-[34px] text-white">Alameda de Colon (Jardín)</h3>
      <div className="mt-5 flex gap-2 text-sm font-bold text-white">
        <span className="flex h-[38px] w-[41px] items-center justify-center border-2 border-black bg-[#382be0] pb-0.5">C5</span>
        <span className="flex h-[38px] w-[41px] items-center justify-center border-2 border-black bg-[#228b74] pb-0.5">C1</span>
      </div>
      <p className="mt-5"><strong>Número de expediciones:</strong> 58</p>
      <p><strong>Amplitud del servicio:</strong> 07:25 - 22:19</p>
      <HourChart />
      <div className="mt-10 flex flex-col items-start gap-5 text-sm text-[#666]">
        <button className="h-10 bg-white px-[31px]">SINCRONIZAR HORARIOS</button>
        <button className="h-10 bg-white px-[31px]">REVISAR TRANSBORDOS</button>
      </div>
      <button className="mt-[50px] h-10 w-full bg-white text-sm text-[#666]">VER TODOS</button>
      <div className="mt-5 flex">
        <table className="flex-1 table-fixed border-collapse text-left">
          <thead>
            <tr className="h-[41px] border-b border-[#849093] text-sm">
              <th className="w-[69px] pl-3 font-normal">LINEA</th>
              <th className="w-[90px] pl-3 font-normal">HORA</th>
              <th className="pl-3 font-normal">INTERVALO</th>
            </tr>
          </thead>
          <tbody>
            {departures.map((d) => (
              <tr key={d.time} className="h-[51px] border-b border-[#849093]">
                <td className="pl-3"><LineBadge name={d.line} /></td>
                <td className="pt-1 pl-3">{d.time}</td>
                <td className="pb-2 pl-3 leading-5">{d.gap}</td>
              </tr>
            ))}
          </tbody>
        </table>
        <div className="flex w-[15px] flex-col items-center bg-[#f1f1f1]">
          <span className="mt-[6px] border-x-4 border-b-4 border-x-transparent border-b-[#a3a3a3]" />
          <span className="mt-[5px] w-[11px] flex-1 bg-[#c1c1c1]" />
        </div>
      </div>
    </div>
  );
}

export default function App() {
  return (
    <div className="grid h-screen grid-cols-[306px_minmax(0,1fr)_306px] gap-20 overflow-hidden bg-white pr-1 pl-6 font-['Roboto',sans-serif] text-base leading-6 text-[#666]">
      <LayersPanel />
      <main className="flex flex-col">
        <SimulationBar />
        <p className="mt-10 text-center text-black">4 viajes en ruta.</p>
        <MapPanel />
      </main>
      <aside className="-mt-2 text-white/70">
        <SectionTitle>Viajes</SectionTitle>
        <div className="mt-5"><TripsCard /></div>
        <div className="mt-5"><SectionTitle>Paradas</SectionTitle></div>
        <div className="mt-5"><StopCard /></div>
      </aside>
    </div>
  );
}
